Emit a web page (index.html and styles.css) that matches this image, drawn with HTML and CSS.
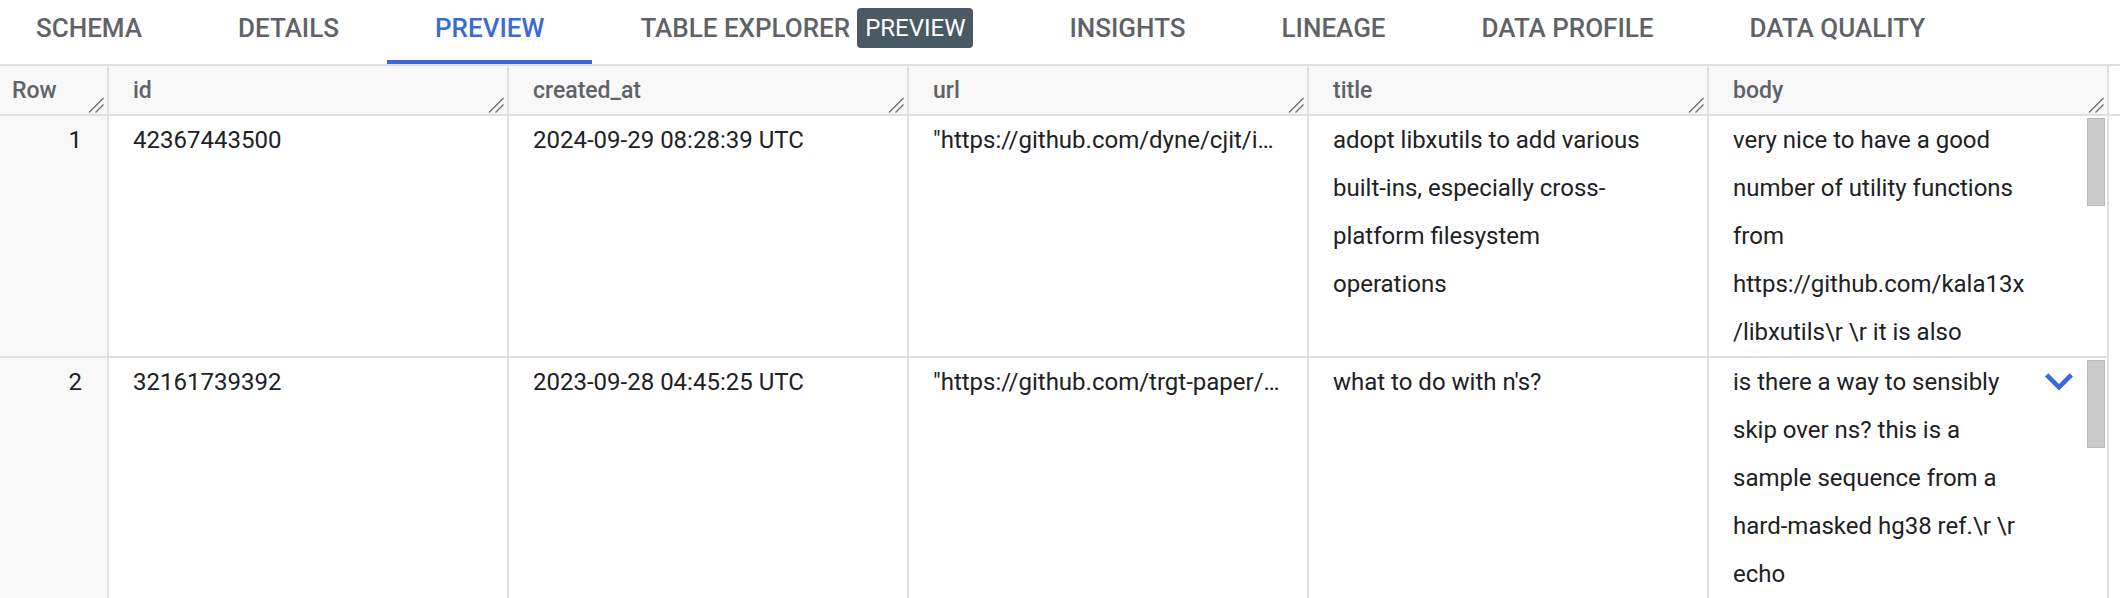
FILE: index.html
```html
<!DOCTYPE html>
<html>
<head>
<meta charset="utf-8">
<link rel="stylesheet" href="styles.css">
</head>
<body>
<nav class="tabs">
  <div class="tab first">SCHEMA</div>
  <div class="tab">DETAILS</div>
  <div class="tab active">PREVIEW</div>
  <div class="tab"><span>TABLE EXPLORER</span><span class="badge">PREVIEW</span></div>
  <div class="tab">INSIGHTS</div>
  <div class="tab">LINEAGE</div>
  <div class="tab">DATA PROFILE</div>
  <div class="tab">DATA QUALITY</div>
</nav>

<div class="thead">
  <div class="th rownum"><span>Row</span><svg class="grip" viewBox="0 0 16 16" width="16" height="16"><path d="M1 15.5L15.5 1M7.5 15.5L15.5 7.5"/></svg></div>
  <div class="th col"><span>id</span><svg class="grip" viewBox="0 0 16 16" width="16" height="16"><path d="M1 15.5L15.5 1M7.5 15.5L15.5 7.5"/></svg></div>
  <div class="th col"><span>created_at</span><svg class="grip" viewBox="0 0 16 16" width="16" height="16"><path d="M1 15.5L15.5 1M7.5 15.5L15.5 7.5"/></svg></div>
  <div class="th col"><span>url</span><svg class="grip" viewBox="0 0 16 16" width="16" height="16"><path d="M1 15.5L15.5 1M7.5 15.5L15.5 7.5"/></svg></div>
  <div class="th col"><span>title</span><svg class="grip" viewBox="0 0 16 16" width="16" height="16"><path d="M1 15.5L15.5 1M7.5 15.5L15.5 7.5"/></svg></div>
  <div class="th col"><span>body</span><svg class="grip" viewBox="0 0 16 16" width="16" height="16"><path d="M1 15.5L15.5 1M7.5 15.5L15.5 7.5"/></svg></div>
</div>

<div class="tr">
  <div class="td rownum">1</div>
  <div class="td col">42367443500</div>
  <div class="td col">2024-09-29 08:28:39 UTC</div>
  <div class="td col url">"https://github.com/dyne/cjit/issues/29"</div>
  <div class="td col wrap">adopt libxutils to add various built-ins, especially cross-platform filesystem operations</div>
  <div class="td col body">
    <div class="bodytext">very nice to have a good number of utility functions from https://github.com/kala13x/libxutils\r \r it is also maintained by a single developer and well tested on many platforms, including windows and macos.</div>
    <div class="actions"></div>
    <div class="track"><div class="thumb"></div></div>
  </div>
</div>

<div class="tr">
  <div class="td rownum">2</div>
  <div class="td col">32161739392</div>
  <div class="td col">2023-09-28 04:45:25 UTC</div>
  <div class="td col url">"https://github.com/trgt-paper/trgt/issues/1"</div>
  <div class="td col wrap">what to do with n's?</div>
  <div class="td col body">
    <div class="bodytext">is there a way to sensibly skip over ns? this is a sample sequence from a hard-masked hg38 ref.\r \r echo "NNNNNNNNNNNNNNNNNNNNNNNNNNNNNNNNNNNNNNNNNNNNNNNNNNNNNNNNNNNN" | trgt genotype</div>
    <div class="actions"><svg class="chev" viewBox="6 8.5 12 7.5" width="28" height="17.5"><path d="M16.59 8.59L12 13.17 7.41 8.59 6 10l6 6 6-6z"/></svg></div>
    <div class="track"><div class="thumb"></div></div>
  </div>
</div>
</body>
</html>
```

FILE: styles.css
```css
html, body {
  margin: 0;
  padding: 0;
  background: #ffffff;
  overflow: hidden;
}

body {
  font-family: Roboto, "Liberation Sans", Arial, sans-serif;
  color: #202124;
  width: 2120px;
  height: 598px;
}

.tabs {
  display: flex;
  height: 64px;
  border-bottom: 2px solid #e0e0e0;
}

.tab {
  box-sizing: border-box;
  height: 64px;
  display: flex;
  align-items: center;
  gap: 7px;
  padding: 0 48px 4px 48px;
  border-bottom: 4px solid transparent;
  font-size: 26px;
  font-weight: 500;
  color: #5f6368;
  white-space: nowrap;
}

.tab.first {
  padding-left: 36px;
}

.tab.active {
  color: #3b6ad5;
  border-bottom-color: #3b6ad5;
}

.badge {
  display: inline-flex;
  align-items: center;
  height: 40px;
  padding: 0 8px;
  border-radius: 4px;
  background: #4a5a65;
  color: #ffffff;
  font-size: 24px;
  font-weight: 400;
}

.thead {
  display: flex;
  height: 48px;
  border-bottom: 2px solid #e0e0e0;
}

.th {
  box-sizing: border-box;
  height: 48px;
  display: flex;
  align-items: center;
  padding-left: 24px;
  background: #f8f8f8;
  border-right: 2px solid #e0e0e0;
  font-size: 23px;
  font-weight: 500;
  color: #5f6368;
}

.th .grip {
  margin-left: auto;
  margin-right: 3px;
  align-self: flex-end;
  margin-bottom: 1px;
  fill: none;
  stroke: #6b6b6b;
  stroke-width: 1.2;
}

.th.rownum {
  width: 109px;
  padding-left: 12px;
}

.col {
  width: 400px;
}

.tr {
  display: flex;
}

.td {
  box-sizing: border-box;
  height: 242px;
  border-right: 2px solid #e0e0e0;
  border-bottom: 2px solid #e0e0e0;
  padding: 0 24px;
  font-size: 24px;
  line-height: 48px;
  overflow: hidden;
}

.td.rownum {
  width: 109px;
  padding: 0 25px 0 0;
  text-align: right;
  background: #f8f8f8;
}

.td.url {
  white-space: nowrap;
  text-overflow: ellipsis;
}

.td.wrap {
  padding-right: 58px;
}

.td.body {
  display: grid;
  grid-template-columns: 296px 1fr 18px;
  padding: 0 2px 0 24px;
}

.bodytext {
  overflow-wrap: break-word;
  overflow: hidden;
}

.actions {
  display: flex;
  justify-content: flex-end;
  align-items: flex-start;
  padding-right: 14px;
}

.chev {
  margin-top: 15px;
  fill: #3b6ad5;
}

.track {
  padding-top: 2px;
}

.thumb {
  box-sizing: border-box;
  height: 88px;
  background: #cbcbcb;
  border: 1px solid #b8b8b8;
}
```
